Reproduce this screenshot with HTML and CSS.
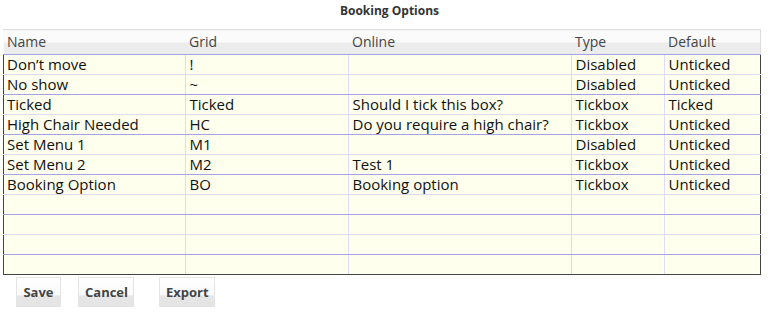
FILE: index.html
```html
<!DOCTYPE html>
<html>
<head>
<meta charset="UTF-8">
<title>Booking Options</title>
<link rel="stylesheet" href="styles.css">
</head>
<body>

	<div class="title">Booking Options</div>

	<table class="grid">
		<tr class="head">
			<td class="cName">Name</td>
			<td class="cGrid">Grid</td>
			<td class="cOnline">Online</td>
			<td class="cType">Type</td>
			<td class="cDefault">Default</td>
		</tr>
		<tr>
			<td>Don’t move</td>
			<td>!</td>
			<td></td>
			<td>Disabled</td>
			<td>Unticked</td>
		</tr>
		<tr>
			<td>No show</td>
			<td>~</td>
			<td></td>
			<td>Disabled</td>
			<td>Unticked</td>
		</tr>
		<tr>
			<td>Ticked</td>
			<td>Ticked</td>
			<td>Should I tick this box?</td>
			<td>Tickbox</td>
			<td>Ticked</td>
		</tr>
		<tr>
			<td>High Chair Needed</td>
			<td>HC</td>
			<td>Do you require a high chair?</td>
			<td>Tickbox</td>
			<td>Unticked</td>
		</tr>
		<tr>
			<td>Set Menu 1</td>
			<td>M1</td>
			<td></td>
			<td>Disabled</td>
			<td>Unticked</td>
		</tr>
		<tr>
			<td>Set Menu 2</td>
			<td>M2</td>
			<td>Test 1</td>
			<td>Tickbox</td>
			<td>Unticked</td>
		</tr>
		<tr>
			<td>Booking Option</td>
			<td>BO</td>
			<td>Booking option</td>
			<td>Tickbox</td>
			<td>Unticked</td>
		</tr>
		<tr><td></td><td></td><td></td><td></td><td></td></tr>
		<tr><td></td><td></td><td></td><td></td><td></td></tr>
		<tr><td></td><td></td><td></td><td></td><td></td></tr>
		<tr class="last"><td></td><td></td><td></td><td></td><td></td></tr>
	</table>

	<div class="buttons">
		<span class="btn" id="btnSave">Save</span>
		<span class="btn" id="btnCancel">Cancel</span>
		<span class="btn" id="btnExport">Export</span>
	</div>

</body>
</html>
```

FILE: styles.css
```css
body {
	margin: 0;
	background: #ffffff;
	font-family: "Open Sans", "Liberation Sans", sans-serif;
	color: #111111;
}

.title {
	height: 21px;
	line-height: 21px;
	text-align: center;
	font-size: 12px;
	font-weight: bold;
	color: #333333;
	padding-left: 8px;
}

.grid {
	margin: 8px 0 0 3px;
	width: 758px;
	border-collapse: collapse;
	table-layout: fixed;
	font-size: 15px;
}

.grid td {
	height: 19px;
	padding: 0 0 0 3px;
	line-height: 19px;
	background: #ffffee;
	border-left: 1px solid #dcdcf8;
	border-bottom: 1px solid #dcdcf8;
	white-space: nowrap;
	overflow: hidden;
}

.grid td + td {
	padding-left: 4px;
}

.grid tr:nth-child(odd) td {
	border-bottom-color: #a4a4e4;
}

.grid tr td:first-child {
	border-left: 1px solid #444444;
}

.grid tr td:last-child {
	border-right: 1px solid #444444;
}

.grid tr.last td {
	border-bottom: 1px solid #444444;
}

.grid tr.head td {
	height: 24px;
	line-height: 24px;
	font-size: 14px;
	color: #444444;
	background: linear-gradient(180deg, #fbfbfb 0%, #fbfbfb 48%, #ececec 52%, #ececec 100%);
	border-top: 1px solid #dddddd;
	border-left: none;
	border-bottom: 1px solid #a4a4e4;
}

.grid tr.head td:first-child {
	border-left: 1px solid #fbfbfb;
}

.grid tr.head td:last-child {
	border-right: 1px solid #dddddd;
}

.cName { width: 178px; }
.cGrid { width: 159px; }
.cOnline { width: 219px; }
.cType { width: 89px; }

.buttons {
	padding: 2px 0 0 16px;
	display: flex;
}

.btn {
	display: inline-block;
	height: 29px;
	line-height: 29px;
	padding: 0 6px;
	font-size: 13px;
	font-weight: bold;
	color: #444444;
	border: 1px solid #e4e4e4;
	border-bottom: none;
	background: linear-gradient(180deg, #ffffff 0%, #fafafa 58%, #e6e6e6 62%, #e4e4e4 100%);
	text-align: center;
}

#btnSave { width: 31px; }
#btnCancel { width: 42px; margin-left: 17px; }
#btnExport { width: 42px; margin-left: 25px; }
```
